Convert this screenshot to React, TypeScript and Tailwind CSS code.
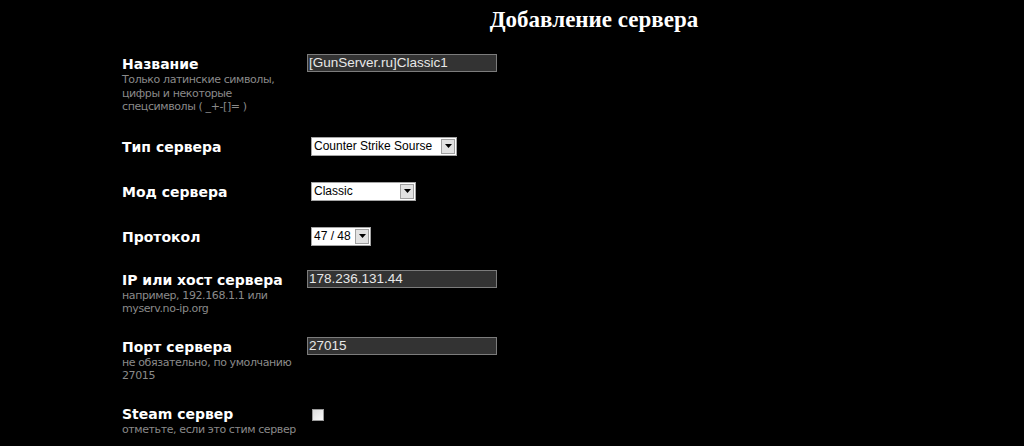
import React from "react";

const labelFont = { fontFamily: '"DejaVu Sans", Verdana, sans-serif' };
const arial = { fontFamily: '"Liberation Sans", Arial, sans-serif' };

function Arrow() {
  return (
    <div className="w-[14px] h-[15px] shrink-0 flex items-center justify-center bg-[#e2e2e2] border border-[#a0a0a0] mr-[1px]">
      <svg width="7" height="4" viewBox="0 0 7 4">
        <path d="M0 0 H7 L3.5 4 Z" fill="#000" />
      </svg>
    </div>
  );
}

function Select({ value, width }: { value: string; width: string }) {
  return (
    <div
      className={`${width} h-[19px] ml-[4px] bg-white border border-[#a5a5a5] flex items-center justify-between`}
    >
      <span className="pl-[2px] min-w-0 text-[12px] text-black leading-none whitespace-nowrap" style={arial}>
        {value}
      </span>
      <Arrow />
    </div>
  );
}

function TextInput({ value }: { value: string }) {
  return (
    <div className="w-[190px] h-[18px] bg-[#333333] border border-[#7c7c7c] flex items-center">
      <span className="pl-[1px] text-[13.5px] text-[#e8e8e8] leading-none whitespace-nowrap" style={arial}>
        {value}
      </span>
    </div>
  );
}

function Row({
  title,
  hint,
  children,
  mt,
}: {
  title: string;
  hint?: React.ReactNode;
  children: React.ReactNode;
  mt: string;
}) {
  return (
    <div className={`flex items-start ${mt}`}>
      <div className="w-[185px] shrink-0" style={labelFont}>
        <div className="text-[14px] font-bold text-white leading-[18px] pt-[1px] whitespace-nowrap">{title}</div>
        {hint && (
          <div className="text-[11px] tracking-[-0.4px] text-[#8a8a8a] leading-[13.5px] whitespace-nowrap">{hint}</div>
        )}
      </div>
      <div>{children}</div>
    </div>
  );
}

export default function App() {
  return (
    <div className="w-[1024px] h-[446px] bg-black overflow-hidden">
      <div className="pl-[164px] pt-[6px] flex justify-center">
        <h1
          className="text-[23px] font-bold text-white leading-[28px]"
          style={{ fontFamily: '"Liberation Serif", "Times New Roman", serif' }}
        >
          Добавление сервера
        </h1>
      </div>
      <div className="pl-[122px] flex flex-col">
        <Row
          mt="mt-[20px]"
          title="Название"
          hint={
            <>
              Только латинские символы,
              <br />
              цифры и некоторые
              <br />
              спецсимволы ( _+-[]= )
            </>
          }
        >
          <TextInput value="[GunServer.ru]Classic1" />
        </Row>
        <Row mt="mt-[23px]" title="Тип сервера">
          <Select value="Counter Strike Sourse" width="w-[146px]" />
        </Row>
        <Row mt="mt-[26px]" title="Мод сервера">
          <Select value="Classic" width="w-[105px]" />
        </Row>
        <Row mt="mt-[26px]" title="Протокол">
          <Select value="47 / 48" width="w-[60px]" />
        </Row>
        <Row
          mt="mt-[24px]"
          title="IP или хост сервера"
          hint={
            <>
              например, 192.168.1.1 или
              <br />
              myserv.no-ip.org
            </>
          }
        >
          <TextInput value="178.236.131.44" />
        </Row>
        <Row
          mt="mt-[21px]"
          title="Порт сервера"
          hint={
            <>
              не обязательно, по умолчанию
              <br />
              27015
            </>
          }
        >
          <TextInput value="27015" />
        </Row>
        <Row mt="mt-[21px]" title="Steam сервер" hint="отметьте, если это стим сервер">
          <div className="ml-[5px] mt-[5px] w-[12px] h-[12px] border border-[#9a9a9a] bg-gradient-to-br from-[#dcdcdc] to-[#fafafa]" />
        </Row>
      </div>
    </div>
  );
}
